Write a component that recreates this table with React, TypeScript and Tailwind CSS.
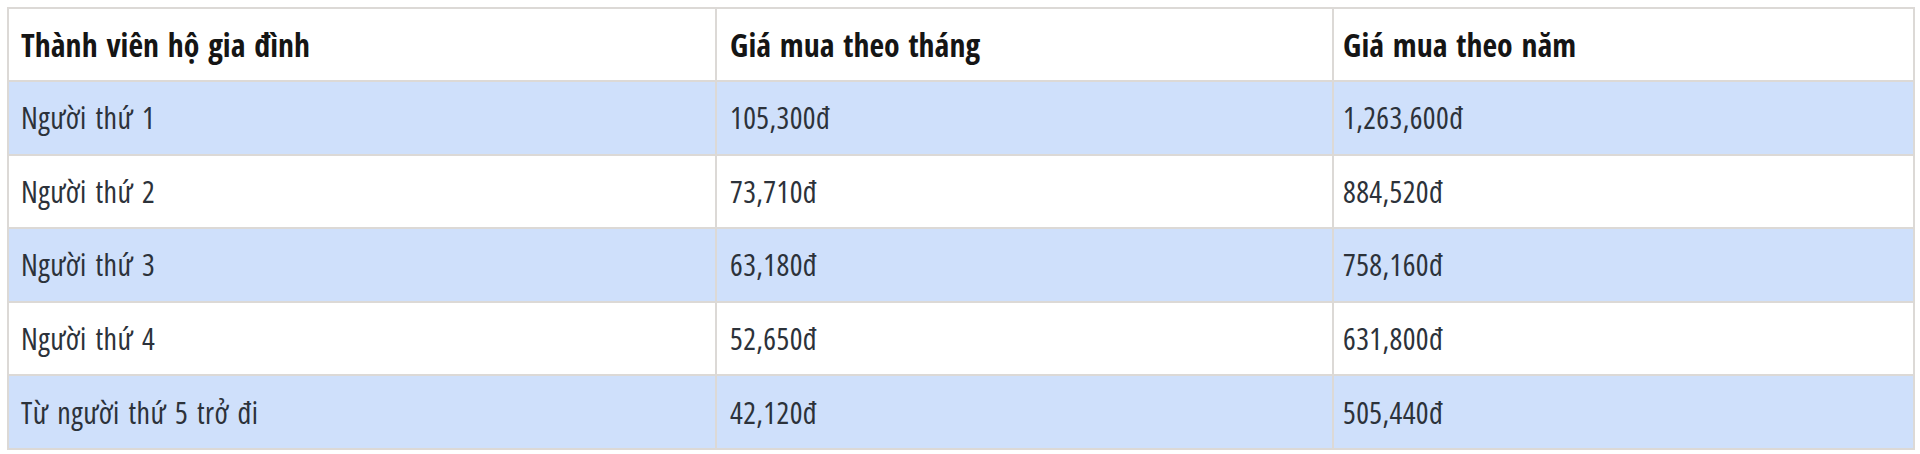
import React from 'react';

const rows = [
  { ten: 'Người thứ 1', thang: '105,300đ', nam: '1,263,600đ' },
  { ten: 'Người thứ 2', thang: '73,710đ', nam: '884,520đ' },
  { ten: 'Người thứ 3', thang: '63,180đ', nam: '758,160đ' },
  { ten: 'Người thứ 4', thang: '52,650đ', nam: '631,800đ' },
  { ten: 'Từ người thứ 5 trở đi', thang: '42,120đ', nam: '505,440đ' },
];

export default function App() {
  return (
    <div
      className="bg-white p-[7px] w-[1920px] h-[454px] font-stretch-condensed"
      style={{ fontFamily: '"Open Sans", "DejaVu Sans Condensed", sans-serif' }}
    >
      <table className="w-[1906px] border-collapse table-fixed">
        <colgroup>
          <col className="w-[708px]" />
          <col className="w-[617px]" />
          <col className="w-[581px]" />
        </colgroup>
        <thead>
          <tr className="h-[73px] bg-white">
            <th className="border-2 border-[#dcd9d6] px-[12px] text-left text-[32px] font-bold [word-spacing:3px] text-[#151515]">Thành viên hộ gia đình</th>
            <th className="border-2 border-[#dcd9d6] px-[13px] text-left text-[32px] font-bold [word-spacing:3px] text-[#151515]">Giá mua theo tháng</th>
            <th className="border-2 border-[#dcd9d6] px-[9px] text-left text-[32px] font-bold [word-spacing:3px] text-[#151515]">Giá mua theo năm</th>
          </tr>
        </thead>
        <tbody className="tracking-[0.4px] [word-spacing:3px]">
          {rows.map((r, i) => (
            <tr key={r.ten} className={`h-[73.6px] ${i % 2 === 0 ? 'bg-[#cfe0fb]' : 'bg-white'}`}>
              <td className="border-2 border-[#dcd9d6] px-[12px] text-[30px] text-[#2c323a]">{r.ten}</td>
              <td className="border-2 border-[#dcd9d6] px-[13px] text-[30px] text-[#2c323a]">{r.thang}</td>
              <td className="border-2 border-[#dcd9d6] px-[9px] text-[30px] text-[#2c323a]">{r.nam}</td>
            </tr>
          ))}
        </tbody>
      </table>
    </div>
  );
}
